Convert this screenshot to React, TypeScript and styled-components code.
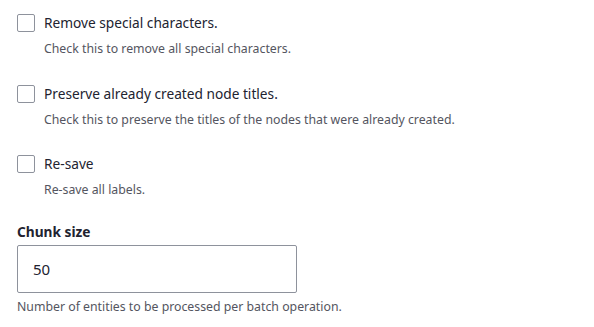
import * as React from "react";
import styled, { createGlobalStyle } from "styled-components";

const GlobalStyle = createGlobalStyle`
  html, body {
    margin: 0;
    padding: 0;
    background: #ffffff;
  }
  body {
    font-family: "Noto Sans", "DejaVu Sans", sans-serif;
    color: #222330;
  }
`;

const SForm = styled.form`
  display: flex;
  flex-direction: column;
  padding: 14px 17px 0;
  width: 594px;
  box-sizing: border-box;
`;

const SCheckItem = styled.div`
  display: flex;
  flex-direction: column;
  margin-bottom: 26.5px;
`;

const SCheckRow = styled.label`
  display: flex;
  align-items: center;
  gap: 9px;
  height: 18px;
  font-size: 13.7px;
  line-height: 18px;
  color: #222330;
  cursor: pointer;
`;

const SBox = styled.input.attrs({ type: "checkbox" })`
  appearance: none;
  -webkit-appearance: none;
  margin: 0;
  width: 18px;
  height: 18px;
  flex: none;
  box-sizing: border-box;
  border: 1px solid #8e929c;
  border-radius: 2px;
  background: #ffffff;
`;

const SDescription = styled.div<{ $indent?: boolean }>`
  font-size: 12.3px;
  line-height: 18px;
  color: #545560;
  margin-top: ${({ $indent }) => ($indent ? "8px" : "5px")};
  margin-left: ${({ $indent }) => ($indent ? "27px" : "0")};
`;

const SFieldLabel = styled.label`
  display: block;
  font-size: 13.7px;
  line-height: 18px;
  font-weight: 700;
  color: #222330;
  margin-top: -3px;
  margin-bottom: 4.5px;
`;

const SInput = styled.input`
  display: block;
  width: 280px;
  height: 48px;
  box-sizing: border-box;
  border: 1px solid #8e929c;
  border-radius: 2px;
  padding: 0 15px;
  font-family: inherit;
  font-size: 15px;
  color: #222330;
  background: #ffffff;
  outline: none;
`;

const options = [
  {
    label: "Remove special characters.",
    description: "Check this to remove all special characters.",
  },
  {
    label: "Preserve already created node titles.",
    description:
      "Check this to preserve the titles of the nodes that were already created.",
  },
  { label: "Re-save", description: "Re-save all labels." },
];

export default function App() {
  return (
    <>
      <GlobalStyle />
      <SForm onSubmit={(e) => e.preventDefault()}>
        {options.map((o) => (
          <SCheckItem key={o.label}>
            <SCheckRow>
              <SBox />
              {o.label}
            </SCheckRow>
            <SDescription $indent>{o.description}</SDescription>
          </SCheckItem>
        ))}
        <SFieldLabel htmlFor="chunk-size">Chunk size</SFieldLabel>
        <SInput id="chunk-size" type="text" defaultValue="50" />
        <SDescription>
          Number of entities to be processed per batch operation.
        </SDescription>
      </SForm>
    </>
  );
}
